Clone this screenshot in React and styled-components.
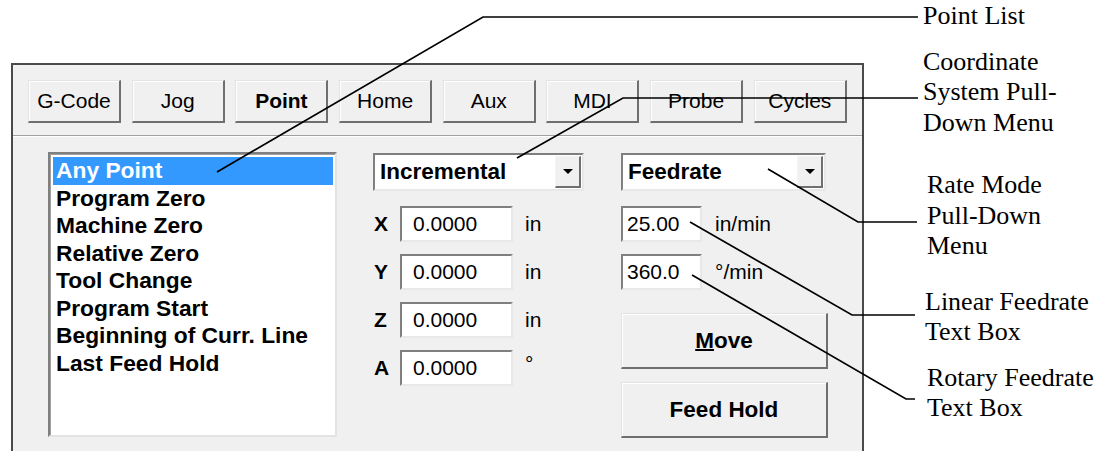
import React from 'react'
import styled, { createGlobalStyle } from 'styled-components'

const GlobalStyle = createGlobalStyle`
  html, body {
    margin: 0;
    padding: 0;
    background: #fff;
  }
`

const Page = styled.div`
  position: relative;
  width: 1113px;
  height: 451px;
  overflow: hidden;
  display: flex;
  background: #fff;
`
const PanelColumn = styled.div`
  padding: 63px 0 0 11px;
`
const Panel = styled.div`
  box-sizing: border-box;
  width: 853px;
  height: 400px;
  border: 2px solid #4a4a4a;
  border-bottom: none;
  background: #f0f0f0;
  font-family: 'Liberation Sans', Arial, sans-serif;
  color: #000;
`
const Toolbar = styled.div`
  display: grid;
  grid-template-columns: repeat(8, 93px);
  column-gap: 10.7px;
  height: 71px;
  box-sizing: border-box;
  padding: 15px 0 0 15px;
  border-bottom: 1px solid #a0a0a0;
  box-shadow: 0 1px 0 #fff;
`
const ToolButton = styled.div`
  box-sizing: border-box;
  height: 43px;
  display: flex;
  align-items: center;
  justify-content: center;
  font-size: 21px;
  font-weight: ${(p) => (p.$active ? 700 : 400)};
  background: #f0f0f0;
  border-style: solid;
  border-width: 1px 2px 2px 1px;
  border-color: #e3e3e3 #6f6f6f #6f6f6f #e3e3e3;
  box-shadow: inset 1px 1px 0 #fff;
`
const Body = styled.div`
  display: flex;
  padding: 16px 0 0 35px;
`
const ListBox = styled.div`
  box-sizing: border-box;
  width: 289px;
  height: 285px;
  background: #fff;
  border: 2px solid;
  border-color: #7f7f7f #e3e3e3 #e3e3e3 #7f7f7f;
  box-shadow: inset 1px 1px 0 #a0a0a0;
  padding: 3px 2px 0 3px;
`
const ListItem = styled.div`
  height: 27.5px;
  line-height: 27.5px;
  padding-left: 3px;
  font-size: 22.8px;
  font-weight: 700;
  white-space: nowrap;
  background: ${(p) => (p.$selected ? '#3399ff' : 'transparent')};
  color: ${(p) => (p.$selected ? '#fff' : '#000')};
`
const Column = styled.div`
  display: flex;
  flex-direction: column;
  margin-left: ${(p) => p.$offset}px;
  padding-top: 1px;
`
const Combo = styled.div`
  box-sizing: border-box;
  width: ${(p) => p.$width}px;
  height: 38px;
  display: flex;
  align-items: center;
  background: #fff;
  border: 2px solid;
  border-color: #7f7f7f #e8e8e8 #e8e8e8 #7f7f7f;
  padding: 1px 1px 1px 5px;
  font-size: 22.5px;
  font-weight: 700;
`
const ComboText = styled.span`
  flex: 1;
`
const DropButton = styled.div`
  box-sizing: border-box;
  width: 26px;
  height: 32px;
  display: flex;
  align-items: center;
  justify-content: center;
  background: #f0f0f0;
  border-style: solid;
  border-width: 1px 2px 2px 1px;
  border-color: #f4f4f4 #6f6f6f #6f6f6f #f4f4f4;
`
const Arrow = styled.div`
  width: 0;
  height: 0;
  border-left: 5px solid transparent;
  border-right: 5px solid transparent;
  border-top: 5px solid #000;
`
const Rows = styled.div`
  display: flex;
  flex-direction: column;
  gap: 12px;
  margin-top: 15px;
`
const FieldRow = styled.div`
  display: flex;
  align-items: center;
  height: 36px;
`
const AxisLabel = styled.span`
  width: 27px;
  padding-left: 1px;
  box-sizing: border-box;
  font-size: 21px;
  font-weight: 700;
`
const TextBox = styled.div`
  box-sizing: border-box;
  width: ${(p) => p.$width}px;
  height: 36px;
  display: flex;
  align-items: center;
  background: #fff;
  border: 2px solid;
  border-color: #7f7f7f #e8e8e8 #e8e8e8 #7f7f7f;
  padding-left: ${(p) => p.$pad}px;
  font-size: 21px;
`
const Unit = styled.span`
  margin-left: ${(p) => p.$gap}px;
  font-size: 21px;
  align-self: ${(p) => (p.$raised ? 'flex-start' : 'center')};
  margin-top: ${(p) => (p.$raised ? '2px' : '0')};
`
const ActionButton = styled.div`
  box-sizing: border-box;
  width: 207px;
  height: 56px;
  margin-top: ${(p) => p.$top}px;
  display: flex;
  align-items: center;
  justify-content: center;
  font-size: 22.5px;
  font-weight: 700;
  background: #f0f0f0;
  border-style: solid;
  border-width: 1px 2px 2px 1px;
  border-color: #e3e3e3 #6f6f6f #6f6f6f #e3e3e3;
  box-shadow: inset 1px 1px 0 #fff;
  u {
    text-decoration-thickness: 2px;
  }
`
const Callouts = styled.div`
  display: flex;
  flex-direction: column;
  padding-left: 59px;
  font-family: 'Liberation Serif', 'Times New Roman', serif;
  font-size: 26px;
  line-height: 30.5px;
  color: #000;
`
const Callout = styled.div`
  margin-top: ${(p) => p.$top}px;
  padding-left: ${(p) => p.$indent || 0}px;
  white-space: nowrap;
`
const Leaders = styled.svg`
  position: absolute;
  left: 0;
  top: 0;
  pointer-events: none;
`

const points = [
  'Any Point',
  'Program Zero',
  'Machine Zero',
  'Relative Zero',
  'Tool Change',
  'Program Start',
  'Beginning of Curr. Line',
  'Last Feed Hold',
]

const tabs = ['G-Code', 'Jog', 'Point', 'Home', 'Aux', 'MDI', 'Probe', 'Cycles']

const axes = [
  { name: 'X', unit: 'in' },
  { name: 'Y', unit: 'in' },
  { name: 'Z', unit: 'in' },
  { name: 'A', unit: '°', raised: true },
]

const leaders = [
  '217,172 483,17 918,17',
  '517,158 623,98 918,98',
  '768,169 858,222 917,222',
  '690,222 852,315 915,315',
  '692,275 906,399 915,399',
]

const App = () => {
  return (
    <Page>
      <GlobalStyle />
      <PanelColumn>
        <Panel>
          <Toolbar>
            {tabs.map((t) => (
              <ToolButton key={t} $active={t === 'Point'}>
                {t}
              </ToolButton>
            ))}
          </Toolbar>
          <Body>
            <ListBox>
              {points.map((p, i) => (
                <ListItem key={p} $selected={i === 0}>
                  {p}
                </ListItem>
              ))}
            </ListBox>
            <Column $offset={36}>
              <Combo $width={211}>
                <ComboText>Incremental</ComboText>
                <DropButton>
                  <Arrow />
                </DropButton>
              </Combo>
              <Rows>
                {axes.map((a) => (
                  <FieldRow key={a.name}>
                    <AxisLabel>{a.name}</AxisLabel>
                    <TextBox $width={113} $pad={11}>
                      0.0000
                    </TextBox>
                    <Unit $gap={12} $raised={a.raised}>
                      {a.unit}
                    </Unit>
                  </FieldRow>
                ))}
              </Rows>
            </Column>
            <Column $offset={37}>
              <Combo $width={205}>
                <ComboText>Feedrate</ComboText>
                <DropButton>
                  <Arrow />
                </DropButton>
              </Combo>
              <Rows>
                <FieldRow>
                  <TextBox $width={81} $pad={4}>
                    25.00
                  </TextBox>
                  <Unit $gap={13}>in/min</Unit>
                </FieldRow>
                <FieldRow>
                  <TextBox $width={81} $pad={4}>
                    360.0
                  </TextBox>
                  <Unit $gap={13}>°/min</Unit>
                </FieldRow>
              </Rows>
              <ActionButton $top={23}>
                <span>
                  <u>M</u>ove
                </span>
              </ActionButton>
              <ActionButton $top={13}>Feed Hold</ActionButton>
            </Column>
          </Body>
        </Panel>
      </PanelColumn>
      <Callouts>
        <Callout $top={1}>Point List</Callout>
        <Callout $top={15}>
          Coordinate
          <br />
          System Pull-
          <br />
          Down Menu
        </Callout>
        <Callout $top={32} $indent={4}>
          Rate Mode
          <br />
          Pull-Down
          <br />
          Menu
        </Callout>
        <Callout $top={25} $indent={2}>
          Linear Feedrate
          <br />
          Text Box
        </Callout>
        <Callout $top={15} $indent={4}>
          Rotary Feedrate
          <br />
          Text Box
        </Callout>
      </Callouts>
      <Leaders width="1113" height="451" viewBox="0 0 1113 451">
        {leaders.map((pts) => (
          <polyline
            key={pts}
            points={pts}
            fill="none"
            stroke="#000"
            strokeWidth="1.7"
          />
        ))}
      </Leaders>
    </Page>
  )
}

export default App
